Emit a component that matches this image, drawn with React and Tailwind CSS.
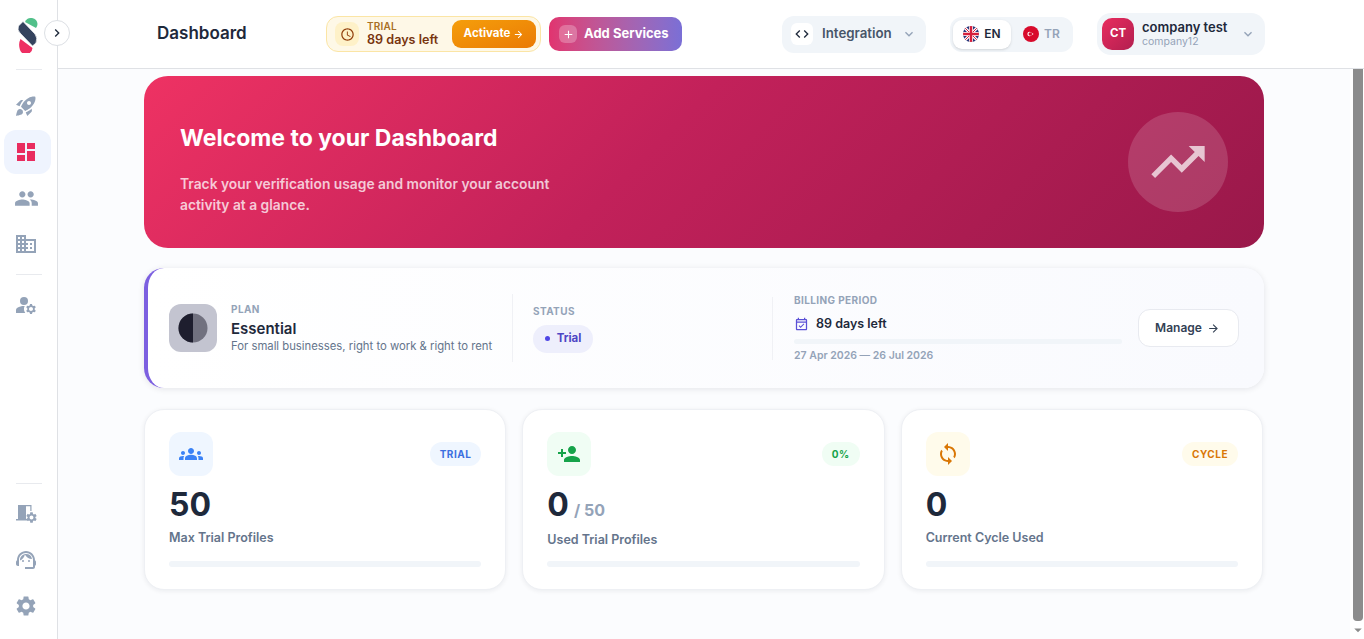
import {
  MdRocketLaunch,
  MdDashboard,
  MdPeople,
  MdDomain,
  MdManageAccounts,
  MdSupportAgent,
  MdSettings,
  MdTrendingUp,
  MdGroups,
  MdPersonAdd,
  MdSync,
  MdOutlineEventAvailable,
  MdOutlineSchedule,
  MdCode,
  MdKeyboardArrowDown,
  MdChevronRight,
  MdAdd,
  MdArrowForward,
  MdArrowDropDown,
} from "react-icons/md";

function Logo() {
  return (
    <svg width="21" height="36" viewBox="0 0 21 36">
      <path d="M8 5 A6.5 6.5 0 0 1 20.5 7 Q20.5 9 19 11 Z" fill="#52c08a" />
      <path d="M3.5 22 L15.5 31 A6.5 6.5 0 0 1 3 33 Q1 27 3.5 22 Z" fill="#ee2f63" />
      <path d="M6 4.5 L18 17 Q21 21 19 26 L15.5 29 L3 16 Q0 13 1.5 9 Z" fill="#34435e" stroke="#fff" strokeWidth="0.7" />
    </svg>
  );
}

function BuildingGear() {
  return (
    <svg width="24" height="24" viewBox="0 0 24 24" fill="#94a3b8">
      <path d="M4 3h8v15.5H2V17h2z" />
      <path d="M12 3h5.5v6h-1.2V4.2H12z" />
      <path d="M12 17h1v1.5h-1z" />
      <MdSettings size={13} x={11} y={9} />
    </svg>
  );
}

function UkFlag() {
  return (
    <svg width="16" height="16" viewBox="0 0 16 16">
      <clipPath id="uk"><circle cx="8" cy="8" r="8" /></clipPath>
      <g clipPath="url(#uk)">
        <rect width="16" height="16" fill="#27367a" />
        <path d="M0 0L16 16M16 0L0 16" stroke="#fff" strokeWidth="3" />
        <path d="M0 0L16 16M16 0L0 16" stroke="#d5203c" strokeWidth="1" />
        <path d="M8 0V16M0 8H16" stroke="#fff" strokeWidth="4" />
        <path d="M8 0V16M0 8H16" stroke="#d5203c" strokeWidth="2.5" />
      </g>
    </svg>
  );
}

function TrFlag() {
  return (
    <svg width="16" height="16" viewBox="0 0 16 16">
      <circle cx="8" cy="8" r="8" fill="#d80b2c" />
      <circle cx="6.6" cy="8" r="2.2" fill="#fff" />
      <circle cx="7.3" cy="8" r="1.8" fill="#d80b2c" />
      <circle cx="9.6" cy="8" r="0.7" fill="#fff" />
    </svg>
  );
}

function NavIcon({ children, active }) {
  return (
    <div className={`w-[47px] h-[44px] rounded-xl flex items-center justify-center pr-[2px] text-[#94a3b8] ${active ? "bg-[#eff4fe]" : ""}`}>
      {children}
    </div>
  );
}

function Sidebar() {
  return (
    <aside className="w-[58px] shrink-0 h-full bg-white border-r border-[#dfe1e5] flex flex-col items-center">
      <div className="h-[69px] flex items-center pr-[3px] shrink-0"><Logo /></div>
      <div className="w-[26px] h-px bg-[#e8eaee] shrink-0" />
      <div className="flex flex-col gap-[2px] mt-[14px] pr-[3px]">
        <NavIcon><MdRocketLaunch size={24} /></NavIcon>
        <NavIcon active><MdDashboard size={24} className="text-[#e92c5f]" /></NavIcon>
        <NavIcon><MdPeople size={25} /></NavIcon>
        <NavIcon><MdDomain size={24} /></NavIcon>
      </div>
      <div className="w-[26px] h-px bg-[#e8eaee] mt-[8px]" />
      <div className="mt-[8px] pr-[3px]"><NavIcon><MdManageAccounts size={24} /></NavIcon></div>
      <div className="flex-1" />
      <div className="w-[26px] h-px bg-[#e8eaee]" />
      <div className="flex flex-col gap-[2px] mt-[8px] mb-[11px] pr-[3px]">
        <NavIcon><BuildingGear /></NavIcon>
        <NavIcon><MdSupportAgent size={24} /></NavIcon>
        <NavIcon><MdSettings size={24} /></NavIcon>
      </div>
    </aside>
  );
}

function Header() {
  return (
    <header className="h-[69px] shrink-0 bg-white border-b border-[#dfe1e5] flex items-center pl-[99px]">
      <h1 className="text-[17px] font-semibold text-[#1e293b] w-[169px]">Dashboard</h1>

      <div className="w-[215px] h-[36px] rounded-[12px] bg-[#fef8e7] border border-[#fbe5a5] flex items-center pl-[8px] pr-[4px]">
        <div className="w-[24px] h-[24px] rounded-lg bg-[#fef1c8] flex items-center justify-center">
          <MdOutlineSchedule size={15} className="text-[#92400e]" />
        </div>
        <div className="ml-[8px] flex-1 leading-none">
          <div className="text-[10px] font-semibold text-[#a86f24] tracking-[0.2px]">TRIAL</div>
          <div className="text-[12.6px] font-semibold text-[#78350f] mt-[3px]">89 days left</div>
        </div>
        <button className="w-[84px] h-[28px] rounded-[9px] bg-gradient-to-br from-[#f59e0b] to-[#ea7a05] text-white text-[11.5px] font-bold flex items-center justify-center gap-[3px]">
          Activate <MdArrowForward size={11} />
        </button>
      </div>

      <button className="ml-[8px] w-[133px] h-[34px] rounded-[10px] bg-gradient-to-r from-[#e1336f] to-[#7a6fd6] text-white text-[13px] font-bold flex items-center pl-[10px] gap-[7px]">
        <span className="w-[18px] h-[18px] rounded-md bg-white/25 flex items-center justify-center"><MdAdd size={13} /></span>
        Add Services
      </button>

      <button className="ml-[100px] w-[144px] h-[37px] rounded-xl bg-[#f1f5f9] flex items-center pl-[9px] pr-[9px]">
        <span className="w-[22px] h-[22px] bg-white rounded-md flex items-center justify-center text-[#1e293b]"><MdCode size={16} /></span>
        <span className="ml-[9px] text-[13.3px] font-semibold text-[#475569] flex-1 text-left">Integration</span>
        <MdKeyboardArrowDown size={16} className="text-[#94a3b8]" />
      </button>

      <div className="ml-[24px] w-[123px] h-[35px] rounded-xl bg-[#f1f5f9] flex items-center pl-[3px]">
        <div className="w-[58px] h-[29px] rounded-[9px] bg-white shadow-sm flex items-center justify-center gap-[5px]">
          <UkFlag />
          <span className="text-[12px] font-semibold text-[#1e293b]">EN</span>
        </div>
        <div className="flex items-center gap-[5px] ml-[12px]">
          <TrFlag />
          <span className="text-[12px] font-semibold text-[#94a3b8]">TR</span>
        </div>
      </div>

      <div className="ml-[24px] w-[168px] h-[42px] rounded-[14px] bg-[#f1f5f9] flex items-center pl-[5px] pr-[9px]">
        <div className="w-[32px] h-[32px] rounded-[10px] bg-gradient-to-br from-[#e92c5f] to-[#b21f4f] text-white text-[11.5px] font-bold flex items-center justify-center">CT</div>
        <div className="ml-[8px] flex-1 leading-none">
          <div className="text-[13px] font-semibold text-[#1e293b]">company test</div>
          <div className="text-[10.5px] text-[#94a3b8] mt-[3px]">company12</div>
        </div>
        <MdKeyboardArrowDown size={16} className="text-[#94a3b8]" />
      </div>
    </header>
  );
}

function Banner() {
  return (
    <section className="h-[172px] rounded-[24px] bg-[linear-gradient(135deg,#ee3263_0%,#c2215a_45%,#99184a_100%)] flex items-center justify-between pl-[36px] pr-[36px]">
      <div className="pt-[14px]">
        <h2 className="text-[23px] font-bold text-white leading-[30px]">Welcome to your Dashboard</h2>
        <p className="mt-[21px] text-[13.8px] font-semibold text-white/75 leading-[21px] w-[400px]">
          Track your verification usage and monitor your account activity at a glance.
        </p>
      </div>
      <div className="w-[100px] h-[100px] rounded-full bg-white/15 flex items-center justify-center">
        <MdTrendingUp size={64} className="text-white/70" />
      </div>
    </section>
  );
}

function SmallLabel({ children }) {
  return <div className="text-[10px] font-bold tracking-[0.4px] text-[#94a3b8] leading-none">{children}</div>;
}

function PlanCard() {
  return (
    <section className="h-[120px] rounded-[20px] border-l-[4px] border-l-[#7c5fe0] bg-gradient-to-r from-white to-[#f9fafe] shadow-[0_1px_6px_rgba(15,23,42,0.10)] flex items-center pl-[21px] pr-[24px]">
      <div className="w-[48px] h-[48px] rounded-xl bg-[#c3c4d0] flex items-center justify-center shrink-0">
        <svg width="30" height="30" viewBox="0 0 30 30">
          <circle cx="15" cy="15" r="14.5" fill="#71717f" />
          <path d="M15 .5a14.5 14.5 0 0 0 0 29z" fill="#1e1e2e" />
        </svg>
      </div>
      <div className="ml-[14px] w-[281px] shrink-0">
        <SmallLabel>PLAN</SmallLabel>
        <div className="text-[15px] font-semibold text-[#1e293b] mt-[5px] leading-[20px]">Essential</div>
        <div className="text-[11.3px] text-[#64748b] leading-[14px] whitespace-nowrap">For small businesses, right to work &amp; right to rent</div>
      </div>
      <div className="w-px h-[68px] bg-[#f0f1f5] shrink-0" />
      <div className="ml-[20px] w-[239px] shrink-0 pt-[2px]">
        <SmallLabel>STATUS</SmallLabel>
        <div className="mt-[9px] w-[60px] h-[28px] rounded-full bg-[#eeeffc] flex items-center justify-center gap-[7px]">
          <span className="w-[5px] h-[5px] rounded-full bg-[#4f46e5]" />
          <span className="text-[11.5px] font-bold text-[#4f46c5]">Trial</span>
        </div>
      </div>
      <div className="w-px h-[63px] bg-[#f0f1f5] shrink-0" />
      <div className="ml-[21px] w-[328px] shrink-0">
        <SmallLabel>BILLING PERIOD</SmallLabel>
        <div className="flex items-center gap-[7px] mt-[10px]">
          <MdOutlineEventAvailable size={15} className="text-[#5b50d6]" />
          <span className="text-[12.5px] font-semibold text-[#1e293b]">89 days left</span>
        </div>
        <div className="h-[5px] rounded-full bg-[#f1f5f9] mt-[5px]" />
        <div className="text-[10.5px] font-semibold text-[#94a3b8] mt-[7px] leading-none">27 Apr 2026 — 26 Jul 2026</div>
      </div>
      <button className="ml-[16px] w-[101px] h-[38px] rounded-xl bg-white border border-[#e8eaf0] text-[12px] font-semibold text-[#334155] flex items-center justify-center gap-[5px] pr-[2px] shrink-0">
        Manage <MdArrowForward size={13} />
      </button>
    </section>
  );
}

function StatCard({ icon, iconBg, badge, badgeClass, value, suffix, label }) {
  return (
    <div className="h-[181px] rounded-[20px] bg-white border border-[#eef0f4] shadow-[0_1px_5px_rgba(15,23,42,0.07)] px-[24px] pt-[22px]">
      <div className="flex items-center justify-between">
        <div className={`w-[44px] h-[44px] rounded-xl flex items-center justify-center ${iconBg}`}>{icon}</div>
        <span className={`h-[24px] px-[10px] rounded-full text-[10px] font-bold tracking-[0.5px] flex items-center ${badgeClass}`}>{badge}</span>
      </div>
      <div className="flex items-baseline mt-[10px] h-[38px]">
        <span className="text-[32px] font-bold text-[#1e293b] leading-[38px]">{value}</span>
        {suffix && <span className="ml-[5px] text-[16px] font-bold text-[#94a3b8]">{suffix}</span>}
      </div>
      <div className={`text-[12.5px] font-semibold text-[#64748b] ${suffix ? "mt-[8px]" : "mt-[6px]"} leading-[16px]`}>{label}</div>
      <div className={`h-[6px] rounded-full bg-[#f1f5f9] ${suffix ? "mt-[13px]" : "mt-[15px]"}`} />
    </div>
  );
}

function Scrollbar() {
  return (
    <div className="w-[14px] shrink-0 bg-white flex flex-col items-center pl-[1px]">
      <div className="w-[10px] h-[552px] bg-[#8c8c8c] rounded-b-[4px]" />
      <MdArrowDropDown size={18} className="text-[#8c8c8c]" />
    </div>
  );
}

export default function App() {
  return (
    <div className="relative w-[1364px] h-[639px] overflow-hidden flex bg-[#fbfcfe] font-['Inter','Liberation_Sans',sans-serif]">
      <Sidebar />
      <div className="flex-1 min-w-0 flex flex-col">
        <Header />
        <div className="flex-1 min-h-0 flex">
          <main className="flex-1 min-w-0 pl-[86px] pr-[86px] pt-[7px]">
            <Banner />
            <div className="mt-[20px]"><PlanCard /></div>
            <div className="mt-[21px] pr-[1px] grid grid-cols-3 gap-[16px]">
              <StatCard
                icon={<MdGroups size={24} className="text-[#3b82f6]" />}
                iconBg="bg-[#eff6ff]"
                badge="TRIAL"
                badgeClass="bg-[#eff6ff] text-[#3b6fe0]"
                value="50"
                label="Max Trial Profiles"
              />
              <StatCard
                icon={<MdPersonAdd size={24} className="text-[#16a34a]" />}
                iconBg="bg-[#f0fdf4]"
                badge="0%"
                badgeClass="bg-[#f0fdf4] text-[#16a34a]"
                value="0"
                suffix="/ 50"
                label="Used Trial Profiles"
              />
              <StatCard
                icon={<MdSync size={24} className="text-[#d97706]" />}
                iconBg="bg-[#fffbeb]"
                badge="CYCLE"
                badgeClass="bg-[#fffbeb] text-[#d97706]"
                value="0"
                label="Current Cycle Used"
              />
            </div>
          </main>
          <Scrollbar />
        </div>
      </div>
      <button className="absolute left-[44px] top-[20px] w-[26px] h-[26px] rounded-full bg-white border border-[#dcdfe4] flex items-center justify-center text-[#1e293b]">
        <MdChevronRight size={16} />
      </button>
    </div>
  );
}
